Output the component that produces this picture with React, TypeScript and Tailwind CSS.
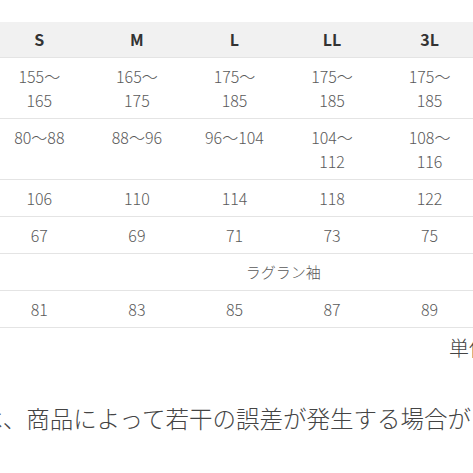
const sizes = ["S", "M", "L", "LL", "3L", "4L"];

const rows: { label: string; values: string[][] }[] = [
  {
    label: "身長",
    values: [
      ["155～", "165"],
      ["165～", "175"],
      ["175～", "185"],
      ["175～", "185"],
      ["175～", "185"],
      ["185～", "195"],
    ],
  },
  {
    label: "胸囲",
    values: [["80～88"], ["88～96"], ["96～104"], ["104～", "112"], ["108～", "116"], ["116～", "124"]],
  },
  { label: "身幅", values: [["106"], ["110"], ["114"], ["118"], ["122"], ["126"]] },
  { label: "着丈", values: [["67"], ["69"], ["71"], ["73"], ["75"], ["77"]] },
];

const App = () => {
  return (
    <div className="w-[473px] h-[473px] overflow-hidden bg-white font-['Noto_Sans_CJK_JP',sans-serif]">
      <div className="w-[683px] ml-[-107px] pt-[22px]">
        {/* Size table */}
        <table className="w-[683px] table-fixed border-collapse text-center">
          <thead>
            <tr className="h-[35px] bg-[#f1f1f1] border-b border-[#e4e4e4]">
              <th className="font-bold text-[16px] text-[#333]">サイズ</th>
              {sizes.map((s) => (
                <th key={s} className="font-bold text-[16px] text-[#333]">
                  {s}
                </th>
              ))}
            </tr>
          </thead>
          <tbody className="text-[16px] font-['Noto_Sans_CJK_JP_Light','Noto_Sans_CJK_JP',sans-serif] font-light text-[#5a5a5a] leading-[24px]">
            {rows.map((r) => (
              <tr key={r.label} className="border-b border-[#e4e4e4]">
                <td className="py-[6px] align-top">{r.label}</td>
                {r.values.map((v, i) => (
                  <td key={i} className="py-[6px] align-top">
                    {v.map((line, j) => (
                      <div key={j}>{line}</div>
                    ))}
                  </td>
                ))}
              </tr>
            ))}
            <tr className="border-b border-[#e4e4e4]">
              <td className="py-[6px]">袖</td>
              <td colSpan={6} className="py-[6px] text-[15px]">
                ラグラン袖
              </td>
            </tr>
            <tr className="border-b border-[#e4e4e4]">
              <td className="py-[6px]">裄丈</td>
              {["81", "83", "85", "87", "89", "91"].map((v) => (
                <td key={v} className="py-[6px]">
                  {v}
                </td>
              ))}
            </tr>
          </tbody>
        </table>

        <div className="flex justify-end pr-[39px] pt-[6px] text-[20px] font-light text-[#444] leading-[28px]">
          単位：cm
        </div>

        <p className="mt-[40px] ml-[-7px] text-[23.5px] font-['Noto_Sans_CJK_JP_Light','Noto_Sans_CJK_JP',sans-serif] font-light text-[#444] leading-[32px] whitespace-nowrap">
          ※サイズは、商品によって若干の誤差が発生する場合があります。
        </p>
      </div>
    </div>
  );
};

export default App;
